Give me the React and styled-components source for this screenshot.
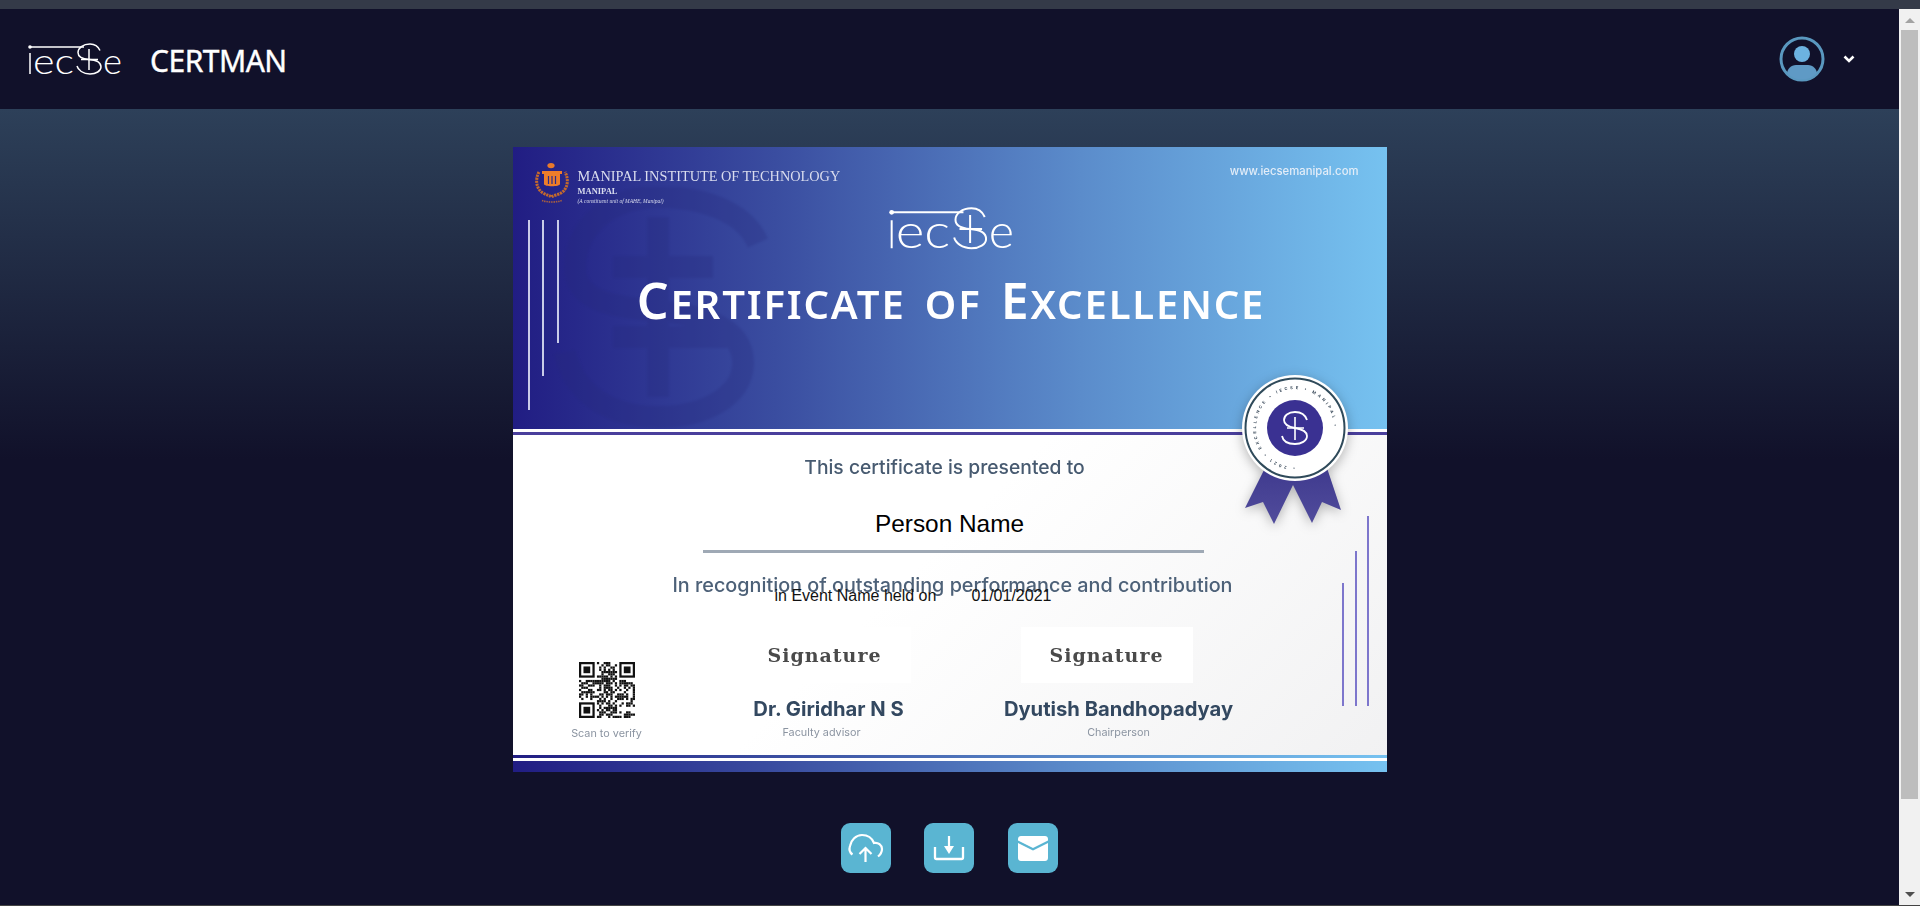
import React from 'react'
import styled, { createGlobalStyle, css } from 'styled-components'

const GlobalStyle = createGlobalStyle`
  html, body { margin: 0; height: 100%; overflow: hidden; background: #11112a; }
  #root { height: 100%; }
  * { box-sizing: border-box; }
`

// the certificate is a scaled picture in the original, so its printed parts look a bit soft
const soft = css`filter: blur(0.45px);`
const wide = `Inter, "Noto Sans", sans-serif`

const Page = styled.div`
  height: 906px;
  display: grid;
  grid-template-rows: 9px 1fr 1px;
  font-family: "Liberation Sans", sans-serif;
`
const TopStrip = styled.div`background: #343a48;`
const BottomLine = styled.div`background: #444;`
const Frame = styled.div`display: flex; min-height: 0;`
const Main = styled.div`flex: 1; display: flex; flex-direction: column; min-width: 0;`

const ScrollTrack = styled.div`
  width: 21px;
  background: #f1f1f1;
  display: flex;
  flex-direction: column;
  align-items: center;
  padding: 9px 0 8px 0;
`
const ScrollArrow = styled.div`
  width: 0;
  height: 0;
  border-left: 5px solid transparent;
  border-right: 5px solid transparent;
  ${p => p.$down
    ? 'border-top: 5px solid #505050; margin-top: auto;'
    : 'border-bottom: 5px solid #a3a3a3;'}
`
const ScrollThumb = styled.div`
  width: 17px;
  height: 769px;
  margin-top: 7px;
  background: #bdbdbd;
`

const Header = styled.header`
  height: 100px;
  background: #11112a;
  display: flex;
  align-items: center;
  padding: 0 44px 0 28px;
`
const LogoSvg = styled.svg`overflow: visible;`
const Brand = styled.h1`
  margin: 3px 0 0 28px;
  font: 400 30px "Noto Sans", sans-serif;
  letter-spacing: -0.5px;
  -webkit-text-stroke: 0.4px #fff;
  color: #fff;
`
const UserMenu = styled.div`
  margin-left: auto;
  display: flex;
  align-items: center;
  gap: 18px;
`

const Content = styled.main`
  flex: 1;
  display: flex;
  flex-direction: column;
  align-items: center;
  padding-top: 38px;
  background: linear-gradient(180deg, #2d4059 0, #11112a 44%);
`

const Certificate = styled.section`
  position: relative;
  width: 874px;
  height: 625px;
  display: flex;
  flex-direction: column;
  background: linear-gradient(135deg, #fff 55%, #f1f1f2 100%);
`
const Banner = styled.div`
  position: relative;
  height: 282px;
  flex: none;
  overflow: hidden;
  background: linear-gradient(90deg, #211d83 0, #3a4da0 30%, #5b8ccb 65%, #76c2f0 100%);
`
const BannerTop = styled.div`
  position: relative;
  display: flex;
  justify-content: space-between;
  padding: 16px 28px 0 22px;
  ${soft}
`
const Institute = styled.div`display: flex; gap: 9px;`
const InstituteText = styled.div`
  display: flex;
  flex-direction: column;
  font-family: "Liberation Serif", serif;
  color: #d9dcee;
  padding-top: 5px;
`
const InstituteName = styled.span`font-size: 14.3px; line-height: 17px;`
const InstituteCity = styled.span`font-size: 8.5px; line-height: 12px; font-weight: bold;`
const InstituteNote = styled.span`font-size: 5.5px; line-height: 8px; font-style: italic;`
const Url = styled.span`
  font: 500 11.3px ${wide};
  color: #e3edf8;
  padding-top: 1px;
`
const BannerCenter = styled.div`
  position: relative;
  display: flex;
  flex-direction: column;
  align-items: center;
  margin-top: 2px;
  padding-left: 3px;
  ${soft}
`
const Title = styled.h2`
  margin: 20px 0 0 0;
  font: 600 40px/60px "Noto Sans", sans-serif;
  letter-spacing: 1.85px;
  word-spacing: 7px;
  white-space: nowrap;
  color: #fff;
`
const Cap = styled.span`font-size: 50px;`
const BannerLine = styled.i`
  position: absolute;
  top: 73px;
  left: ${p => p.$x}px;
  width: 2px;
  height: ${p => p.$h}px;
  background: #c9cce8;
  ${soft}
`
const Watermark = styled.svg`
  position: absolute;
  left: 40px;
  top: 40px;
  opacity: .26;
  filter: blur(0.8px);
`
const BannerRule = styled.div`
  flex: none;
  height: 6px;
  background: linear-gradient(180deg, #fff 0 3px, #4a3f9c 3px 6px);
  ${soft}
`

const Body = styled.div`
  flex: 1;
  display: flex;
  flex-direction: column;
  align-items: center;
`
const Lead = styled.p`
  margin: 20px 10px 0 0;
  font: 500 19.3px/24px ${wide};
  color: #475a70;
  ${soft}
`
const Person = styled.div`
  margin-top: 30px;
  font: 24.4px/30px "Liberation Sans", sans-serif;
  color: #000;
`
const NameRule = styled.div`
  width: 501px;
  height: 3px;
  margin: 11px 0 0 8px;
  background: #9fa9b5;
  ${soft}
`
const Recognition = styled.p`
  margin: 20px 0 0 6px;
  font: 500 19.8px/24px ${wide};
  color: #4d6178;
  white-space: nowrap;
  ${soft}
`
const EventLine = styled.div`
  position: absolute;
  left: 262px;
  top: 439px;
  display: flex;
  gap: 35px;
  font: 16px/20px "Liberation Sans", sans-serif;
  color: #111;
`
const Signers = styled.div`
  align-self: stretch;
  margin-top: 30px;
  display: grid;
  grid-template-columns: 100px 200px 240px;
  column-gap: 71px;
  padding-left: 44px;
`
const Signer = styled.div`
  display: flex;
  flex-direction: column;
  align-items: center;
`
const SignatureBox = styled.div`
  width: 172px;
  height: 56px;
  display: flex;
  align-items: center;
  justify-content: center;
  background: #fff;
  margin-right: ${p => p.$shift || 0}px;
  font: bold 19px "DejaVu Serif", serif;
  letter-spacing: 1px;
  color: #4a4a4a;
  span { ${soft} }
`
const SignerName = styled.div`
  margin-top: 14px;
  margin-left: ${p => p.$shift || 0}px;
  font: 700 20.2px/24px ${wide};
  color: #334860;
  white-space: nowrap;
  ${soft}
`
const SignerRole = styled.div`
  margin-top: ${p => p.$gap || 5}px;
  margin-right: ${p => p.$shift || 0}px;
  font: 400 10.8px/14px ${wide};
  color: #8b94a1;
  ${soft}
`
const QrColumn = styled(Signer)`padding-top: 35px;`

const BottomBand = styled.div`
  flex: none;
  height: 17px;
  background:
    linear-gradient(180deg, transparent 0 3px, #fff 3px 6px, transparent 6px),
    linear-gradient(90deg, #211d83 0, #3a4da0 30%, #5b8ccb 65%, #76c2f0 100%);
  ${soft}
`
const SideLine = styled.i`
  position: absolute;
  bottom: 66px;
  left: ${p => p.$x}px;
  width: 2px;
  height: ${p => p.$h}px;
  background: #7d76cc;
  ${soft}
`
const Seal = styled.svg`
  position: absolute;
  left: 712px;
  top: 223px;
  filter: drop-shadow(0 3px 6px rgba(0, 0, 0, .28)) blur(0.35px);
`

const Actions = styled.div`
  margin-top: 51px;
  display: flex;
  gap: 33px;
`
const ActionButton = styled.button`
  width: 50px;
  height: 50px;
  padding: 0;
  border: none;
  border-radius: 9px;
  background: #5ab5d2;
  color: #fff;
  display: flex;
  align-items: center;
  justify-content: center;
  & + & + & { margin-left: 1px; }
`

function LogoMark({ width }) {
  return (
    <LogoSvg width={width} height={width * 32 / 94} viewBox="0 0 94 32" fill="none">
      <circle cx="2" cy="4" r="1.8" fill="#fff" />
      <path d="M2 4H56M2 10V31" stroke="#fff" strokeWidth="1.5" />
      <text x="5" y="30.5" fontFamily="Lato, sans-serif" fontWeight="300" fontSize="36" fill="#fff" textLength="41" lengthAdjust="spacingAndGlyphs">ec</text>
      <path d="M72 7.5C70 3 66 1 62 1C55 1 50 5 50 9.5C50 14 55 16 61 16.5C68 17 73 19 73 24C73 28 68 31 62 31C55 31 50 27 49 23" stroke="#fff" strokeWidth="1.5" />
      <path d="M61 6V27M53 16.5H70" stroke="#fff" strokeWidth="1.5" />
      <text x="75" y="30.5" fontFamily="Lato, sans-serif" fontWeight="300" fontSize="36" fill="#fff" textLength="19" lengthAdjust="spacingAndGlyphs">e</text>
    </LogoSvg>
  )
}

function UserIcon() {
  return (
    <svg width="46" height="46" viewBox="0 0 46 46">
      <defs>
        <clipPath id="userClip"><circle cx="23" cy="23" r="20.5" /></clipPath>
      </defs>
      <circle cx="23" cy="23" r="21" fill="none" stroke="#5a98bf" strokeWidth="3" />
      <circle cx="23" cy="18" r="8" fill="#6cb2e0" />
      <path d="M8 46V38C8 33 12 29 17 29H29C34 29 38 33 38 38V46Z" fill="#5f9ac5" clipPath="url(#userClip)" />
    </svg>
  )
}

function Chevron() {
  return (
    <svg width="12" height="8" viewBox="0 0 12 8">
      <path d="M1.5 1.5L6 6L10.5 1.5" fill="none" stroke="#fff" strokeWidth="2.6" />
    </svg>
  )
}

function Crest() {
  return (
    <svg width="34" height="40" viewBox="0 0 34 40" fill="none">
      <ellipse cx="16" cy="2.6" rx="3.6" ry="2.6" fill="#e8792c" />
      <path d="M7 8H27V11H25V21C25 24 9 24 9 21V11H7Z" fill="#ee7d2a" />
      <path d="M13.500 13V21M17 13V21M20.500 13V21" stroke="#2a2a8c" strokeWidth="1.2" />
      <path d="M4 9C0 16 1 26 8 30C11 32 14 32 16.500 34C19 32 23 32 26 30C33 26 34 16 30 9" stroke="#c56a2c" strokeWidth="3" strokeDasharray="2.2 .8" />
      <path d="M7 37.500C13 39.500 21 39.500 27 37.500" stroke="#a9603f" strokeWidth="1.6" strokeDasharray="1.5 .8" />
    </svg>
  )
}

function QrCode() {
  const n = 25
  const cell = 56 / n
  const cells = []
  const inFinder = (x, y) => (x < 8 && y < 8) || (x > 16 && y < 8) || (x < 8 && y > 16)
  let seed = 7
  for (let y = 0; y < n; y++) {
    for (let x = 0; x < n; x++) {
      seed = (seed * 1103515245 + 12345) & 0x7fffffff
      if (!inFinder(x, y) && (seed >> 16) % 100 < 52) {
        cells.push(<rect key={`${x}-${y}`} x={x * cell} y={y * cell} width={cell} height={cell} />)
      }
    }
  }
  const finders = [[0, 0], [18, 0], [0, 18]]
  return (
    <svg width="56" height="56" viewBox="0 0 56 56" fill="#111" style={{ filter: 'blur(0.4px)' }}>
      {cells}
      {finders.map(([x, y]) => (
        <g key={`${x}-${y}`}>
          <rect x={x * cell + cell / 2} y={y * cell + cell / 2} width={cell * 6} height={cell * 6} fill="none" stroke="#111" strokeWidth={cell} />
          <rect x={(x + 2) * cell} y={(y + 2) * cell} width={cell * 3} height={cell * 3} />
        </g>
      ))}
    </svg>
  )
}

function BannerWatermark() {
  return (
    <Watermark width="215" height="242" viewBox="0 0 215 242" fill="none" stroke="#262a7c">
      <path d="M205 56C190 22 145 10 105 10C55 10 22 42 22 80C22 112 55 120 105 124C150 128 190 140 190 176C190 210 150 230 105 230C60 230 20 208 12 165" strokeWidth="22" />
      <path d="M105 30V210M60 80H160M60 150H180" strokeWidth="22" />
    </Watermark>
  )
}

export default function App() {
  return (
    <Page>
      <GlobalStyle />
      <TopStrip />
      <Frame>
        <Main>
          <Header>
            <LogoMark width={94} />
            <Brand>CERTMAN</Brand>
            <UserMenu>
              <UserIcon />
              <Chevron />
            </UserMenu>
          </Header>
          <Content>
            <Certificate>
              <Banner>
                <BannerWatermark />
                <BannerLine $x={15} $h={190} />
                <BannerLine $x={29} $h={156} />
                <BannerLine $x={44} $h={123} />
                <BannerTop>
                  <Institute>
                    <Crest />
                    <InstituteText>
                      <InstituteName>MANIPAL INSTITUTE OF TECHNOLOGY</InstituteName>
                      <InstituteCity>MANIPAL</InstituteCity>
                      <InstituteNote>(A constituent unit of MAHE, Manipal)</InstituteNote>
                    </InstituteText>
                  </Institute>
                  <Url>www.iecsemanipal.com</Url>
                </BannerTop>
                <BannerCenter>
                  <LogoMark width={125} />
                  <Title><Cap>C</Cap>ERTIFICATE OF <Cap>E</Cap>XCELLENCE</Title>
                </BannerCenter>
              </Banner>
              <BannerRule />
              <Body>
                <Lead>This certificate is presented to</Lead>
                <Person>Person Name</Person>
                <NameRule />
                <Recognition>In recognition of outstanding performance and contribution</Recognition>
                <Signers>
                  <QrColumn>
                    <QrCode />
                    <SignerRole $gap={9}>Scan to verify</SignerRole>
                  </QrColumn>
                  <Signer>
                    <SignatureBox $shift={6}><span>Signature</span></SignatureBox>
                    <SignerName $shift={2}>Dr. Giridhar N S</SignerName>
                    <SignerRole $shift={12}>Faculty advisor</SignerRole>
                  </Signer>
                  <Signer>
                    <SignatureBox $shift={24}><span>Signature</span></SignatureBox>
                    <SignerName>Dyutish Bandhopadyay</SignerName>
                    <SignerRole>Chairperson</SignerRole>
                  </Signer>
                </Signers>
              </Body>
              <BottomBand />
              <SideLine $x={829} $h={123} />
              <SideLine $x={842} $h={155} />
              <SideLine $x={854} $h={190} />
              <EventLine>
                <span>in Event Name held on</span>
                <span>01/01/2021</span>
              </EventLine>
              <Seal width="124" height="160" viewBox="0 0 124 160">
                <defs>
                  <linearGradient id="ribbon" x1="0" y1="0" x2="0" y2="1">
                    <stop offset="0" stopColor="#3f3a8e" />
                    <stop offset="1" stopColor="#514c9c" />
                  </linearGradient>
                </defs>
                <path d="M40 98L20 138L38 132L49 154L68 115L87 153L97 132L116 140L102 98Z" fill="url(#ribbon)" />
                <g transform="translate(2 0)">
                  <circle cx="68" cy="58" r="53" fill="#fff" />
                  <circle cx="68" cy="58" r="49.500" fill="none" stroke="#2f4a5a" strokeWidth="2" />
                  <circle cx="68" cy="58" r="28" fill="#3a3192" />
                  <path id="sealText" d="M68 97a39 39 0 1 1 .01 0" fill="none" />
                  <text fontFamily="Inter, sans-serif" fontSize="4" fontWeight="700" letterSpacing="2.6" fill="#3a4a5a">
                    <textPath href="#sealText">• 2021 • EXCELLENCE • IECSE • MANIPAL •</textPath>
                  </text>
                  <path d="M80 50C78 44 73 42 68 42C61 42 57 46 57 50C57 55 62 57 68 58C74 59 80 61 80 66C80 71 74 74 68 74C61 74 56 71 55 66" fill="none" stroke="#fff" strokeWidth="1.8" />
                  <path d="M68 47V70M60 58H77" fill="none" stroke="#fff" strokeWidth="1.6" />
                </g>
              </Seal>
            </Certificate>
            <Actions>
              <ActionButton aria-label="upload">
                <svg width="50" height="50" viewBox="0 0 50 50" fill="none" stroke="#fff" strokeWidth="2.2">
                  <path d="M11.500 31.500C8.500 29.500 8 26 9 23C10 17 15 12 21 12C27 12 31 15 33 20C37 19 41 22 41 26C41 29 39.500 31.500 37 33.500" />
                  <path d="M24.500 39V26M18.500 31L24.500 25L30.500 31" />
                </svg>
              </ActionButton>
              <ActionButton aria-label="download">
                <svg width="50" height="50" viewBox="0 0 50 50" fill="none">
                  <path d="M11 24V34.500A1.500 1.500 0 0 0 12.500 36H37.500A1.500 1.500 0 0 0 39 34.500V24" stroke="#fff" strokeWidth="2.300" />
                  <path d="M25 13V24" stroke="#fff" strokeWidth="2.200" />
                  <path d="M20 23H30L25 31Z" fill="#fff" />
                </svg>
              </ActionButton>
              <ActionButton aria-label="email">
                <svg width="30" height="25" viewBox="0 0 30 25">
                  <path d="M3 0H27C28.700 0 30 1.300 30 3V4.500L15 12L0 4.500V3C0 1.300 1.300 0 3 0Z" fill="#fff" />
                  <path d="M0 7L15 14.500L30 7V22C30 23.700 28.700 25 27 25H3C1.300 25 0 23.700 0 22Z" fill="#fff" />
                </svg>
              </ActionButton>
            </Actions>
          </Content>
        </Main>
        <ScrollTrack>
          <ScrollArrow />
          <ScrollThumb />
          <ScrollArrow $down />
        </ScrollTrack>
      </Frame>
      <BottomLine />
    </Page>
  )
}
